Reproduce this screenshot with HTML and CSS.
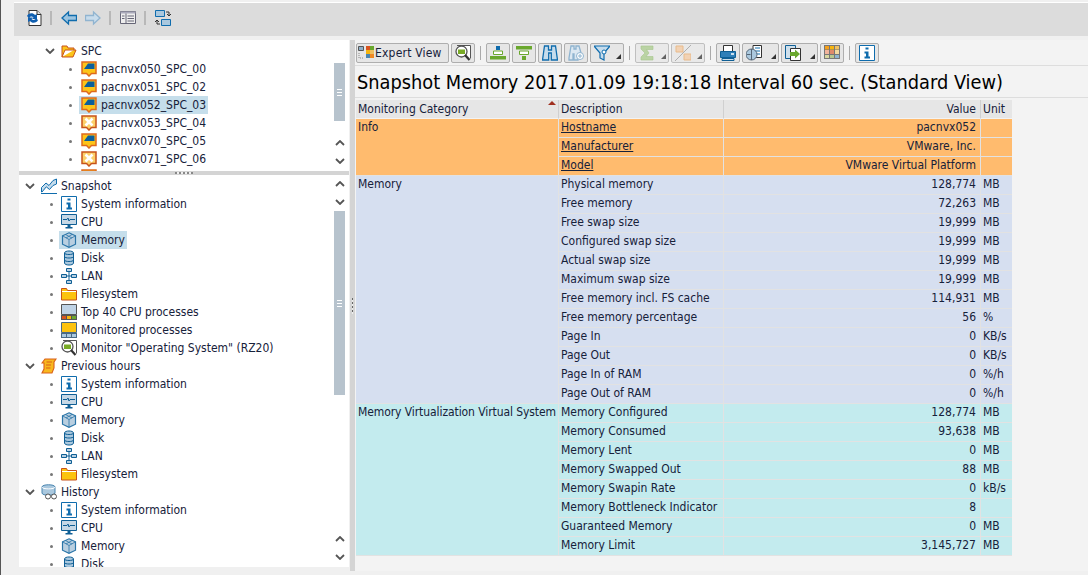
FILE: index.html
```html
<!DOCTYPE html>
<html lang="en">
<head>
<meta charset="utf-8">
<title>Snapshot Memory</title>
<link rel="stylesheet" href="styles.css">
</head>
<body>
<svg class="defs" width="0" height="0" aria-hidden="true">
  <defs>
    <symbol id="i-chev" viewBox="0 0 10 6"><path d="M1 1l4 4 4-4" fill="none" stroke="#555" stroke-width="1.8"/></symbol>
    <symbol id="i-up" viewBox="0 0 10 6"><path d="M1 5l4-4 4 4" fill="none" stroke="#555" stroke-width="1.8"/></symbol>
    <symbol id="i-open" viewBox="0 0 16 16"><path d="M1 14V3h5l1 2h6v2H4l-3 7h11l3-7H13" fill="#fcc419" stroke="#c8531a"/></symbol>
    <symbol id="i-folder" viewBox="0 0 16 16"><path d="M.5 14V2.500h5l1 2h9V14z" fill="#fcc30f" stroke="#c8531a"/><path d="M1 5.500h14" stroke="#fff"/></symbol>
    <symbol id="i-srv" viewBox="0 0 16 16"><path d="M1 1h14v11.500h-4.500L8 15l-2.500-2.500H1z" fill="#fcc419" stroke="#de6a1e" stroke-width="1.500"/><path d="M7 2.500h6.500v5.500H3z" fill="#0a5e9c"/></symbol>
    <symbol id="i-srvx" viewBox="0 0 16 16"><path d="M1 1h14v11.500h-4.500L8 15l-2.500-2.500H1z" fill="#fcd06a" stroke="#c8531a" stroke-width="1.500"/><path d="M4.500 3.500l7 7m0-7l-7 7" stroke="#fff" stroke-width="2.600"/></symbol>
    <symbol id="i-info" viewBox="0 0 16 16"><path d="M.5.500h15v15H.5z" fill="#fff" stroke="#0f6cad"/><path d="M6.500 2.500h3v2h-3zM5.500 6.500h4v5h1.500v2H5.500v-2H7v-3H5.500z" fill="#0f6cad"/></symbol>
    <symbol id="i-cpu" viewBox="0 0 16 16"><path d="M.500.500h15v10H.5z" fill="#c6d8e6" stroke="#0f5f95"/><path d="M2 5.500h4l1-1.500 1 3 1-1.500h5" fill="none" stroke="#0f5f95"/><path d="M6.500 11h3v2h2v1.500h-7V13h2z" fill="#0f5f95"/></symbol>
    <symbol id="i-mem" viewBox="0 0 16 16"><path d="M8 .800l6.500 3v8.400L8 15.300l-6.500-3.100V3.800z" fill="#b9cfe0" stroke="#2a75a8" stroke-width="1.200"/><path d="M1.500 3.800L8 7.500l6.500-3.700M8 7.500v7.800M4.500 2.500L11 6M11 2.500L5 6" fill="none" stroke="#2a75a8" stroke-width=".8"/></symbol>
    <symbol id="i-disk" viewBox="0 0 16 16"><path d="M3.500 3c0-2.700 9-2.700 9 0v10c0 2.700-9 2.700-9 0z" fill="#aac8de" stroke="#0f5f95"/><path d="M3.500 3c0 2 9 2 9 0M3.500 6.500c0 2 9 2 9 0M3.500 10c0 2 9 2 9 0" fill="none" stroke="#0f5f95"/></symbol>
    <symbol id="i-lan" viewBox="0 0 16 16"><path d="M8 3v10M3 8h10" stroke="#0f5f95"/><path d="M5.500.500h5v3h-5zM.500 6.500h5v3h-5zM10.500 6.500h5v3h-5zM5.500 12.500h5v3h-5z" fill="#b8d0e2" stroke="#0f5f95"/></symbol>
    <symbol id="i-top" viewBox="0 0 16 16"><path d="M.500.500h15v10H.5z" fill="#bfd3e6" stroke="#555"/><path d="M0 11h16v5H0z" fill="#555"/><path d="M1 12h4v3H1z" fill="#d9531e"/><path d="M6 12h4v3H6z" fill="#f6b40e"/><path d="M11 12h4v3h-4z" fill="#6aa82e"/></symbol>
    <symbol id="i-mon" viewBox="0 0 16 16"><path d="M.500.500h15v10H.5z" fill="#fcc30f" stroke="#4a6a85"/><path d="M0 11h16v5H0z" fill="#4a6a85"/><path d="M1 12h4v3H1zM6 12h4v3H6zM11 12h4v3h-4z" fill="#aac8de"/></symbol>
    <symbol id="i-rz" viewBox="0 0 16 16"><path d="M2 .500h13.500v13" fill="#fff" stroke="#555"/><circle cx="6.500" cy="6.500" r="5.500" fill="#fff" stroke="#555" stroke-width="1.300"/><path d="M3 4.500h7V9H3z" fill="#79ab26"/><path d="M10 10l4.500 5" stroke="#333" stroke-width="2.200"/></symbol>
    <symbol id="i-chart" viewBox="0 0 16 16"><path d="M.500 14V9.500L5 5l3 2.500 4-5 3.500-1.500v5L12 7.500l-3.500 4-3.200-2.700L1 14z" fill="#c6dcec" stroke="#0f6cad"/><path d="M0 15.500h16" stroke="#0f6cad"/></symbol>
    <symbol id="i-scroll" viewBox="0 0 16 16"><path d="M4 1h11l-2 3v6l-2 5H1l2-4V5H1z" fill="#f8b81f" stroke="#d9601a" stroke-width="1.100"/><path d="M5.500 4h5.500M5 7h5M5 10h4.500" stroke="#d9601a"/></symbol>
    <symbol id="i-hist" viewBox="0 0 16 16"><path d="M1 3c0-3 13-3 13 0v6c0 3-13 3-13 0z" fill="#aac8de" stroke="#4a86b0"/><path d="M1 3c0 2.500 13 2.500 13 0" fill="none" stroke="#fff"/><circle cx="7" cy="12.500" r="2.500" fill="#fff" stroke="#555"/><circle cx="13" cy="12.500" r="2.500" fill="#fff" stroke="#555"/></symbol>
    <symbol id="i-grid" viewBox="0 0 16 16"><path d="M.500 1.500h5v4h-5z" fill="#8fb0c9" stroke="#555"/><path d="M1 8v5h5" fill="none" stroke="#888" stroke-dasharray="1 1"/><path d="M8 1h4v4H8z" fill="#d9531e"/><path d="M8 5h4v4H8z" fill="#f6b40e"/><path d="M8 9h4v4H8z" fill="#4a86b0"/><path d="M12 1h4v4h-4z" fill="#6aa82e"/><path d="M12 5h4v4h-4z" fill="#f0c060"/><path d="M12 9h4v4h-4z" fill="#f08a24"/></symbol>
    <symbol id="i-alignc" viewBox="0 0 16 16"><path d="M6 1h4v4H6z" fill="#0f6cad"/><path d="M3.500 6h9v3.500h-9z" fill="#fff" stroke="#6aa82e"/><path d="M0 11h16v3.500H0z" fill="#6aa82e"/></symbol>
    <symbol id="i-filt" viewBox="0 0 16 16"><path d="M0 1h16v3.500H0z" fill="#6aa82e"/><path d="M3.500 6h9v3.500h-9z" fill="#fff" stroke="#6aa82e"/><path d="M6 11h4v4H6z" fill="#6aa82e"/></symbol>
    <symbol id="i-bin" viewBox="0 0 16 16"><path d="M2.500 1h4v4h3V1h4l2 14H9.300V8H6.700v7H.500z" fill="#c6dcec" stroke="#0f6cad" stroke-width="1.300"/></symbol>
    <symbol id="i-binp" viewBox="0 0 16 16"><path d="M3 1h3v3h2V1h3l2 7-3 2v5H6V9H5v6H1v-2z" fill="#dce8f2" stroke="#8fb4d0" stroke-width="1.300"/><circle cx="12" cy="11" r="3.500" fill="#fff" stroke="#8fb4d0"/><path d="M10 11h4M12 9v4" stroke="#8fb4d0"/></symbol>
    <symbol id="i-fun" viewBox="0 0 16 16"><path d="M0 1h16l-6 7v7l-4-2V8z" fill="#c6dcec" stroke="#0f6cad" stroke-width="1.200"/><circle cx="10" cy="7" r="2" fill="#fff" stroke="#0f6cad"/></symbol>
    <symbol id="i-sum" viewBox="0 0 16 16"><path d="M2 1h12v3.500H7.500L10 8l-3 3.500h7V15H2v-3l4-4-4-4z" fill="#a8c98a" stroke="#8cb56a" stroke-width=".6"/></symbol>
    <symbol id="i-sub" viewBox="0 0 16 16"><path d="M1 1h7v6H1z" fill="#f2c8a0" stroke="#e6a96a"/><path d="M9 9h7v6H9z" fill="#f2c8a0" stroke="#e6a96a"/><path d="M16 0L0 16" stroke="#999"/></symbol>
    <symbol id="i-print" viewBox="0 0 16 16"><path d="M3.500.500h9v6h-9z" fill="#fff" stroke="#333"/><path d="M.500 6.500h15v6H.5z" fill="#2f7fb8" stroke="#0f5f95"/><path d="M2 13.500h12v2H2z" fill="#cfdfea" stroke="#0f5f95"/><path d="M11 9h3" stroke="#fff" stroke-width="1.500"/></symbol>
    <symbol id="i-view" viewBox="0 0 16 16"><path d="M7 .500h8.500v12H7z" fill="#fff" stroke="#333"/><path d="M9 3h5M9 6h5M9 9h5" stroke="#0f6cad"/><circle cx="5.500" cy="9.500" r="5.500" fill="#aac8de" stroke="#567"/><path d="M5.500 4v11M.500 9.500h4" stroke="#567"/></symbol>
    <symbol id="i-exp" viewBox="0 0 16 16"><path d="M.500.500h10v13H.5z" fill="#cfe0ec" stroke="#0f5f95"/><path d="M5.500 3.500h10v12h-10z" fill="#fff" stroke="#333"/><path d="M5 7h5V4.500L15 9l-5 4.500V11H5z" fill="#6aa82e"/></symbol>
    <symbol id="i-cols" viewBox="0 0 16 16"><path d="M0 0h16v14H0z" fill="#777"/><path d="M1 1h4v3.500H1z" fill="#f6a01a"/><path d="M6 1h4v3.500H6z" fill="#f6b40e"/><path d="M11 1h4v3.500h-4z" fill="#f0c060"/><path d="M1 5h4v4H1z" fill="#f2b49c"/><path d="M6 5h4v4H6z" fill="#e08a6a"/><path d="M11 5h4v4h-4z" fill="#f3d9a0"/><path d="M1 10h4v3H1z" fill="#d8d8a0"/><path d="M6 10h4v3H6z" fill="#b8c890"/><path d="M11 10h4v3h-4z" fill="#8fb4d0"/></symbol>
    <symbol id="i-refresh" viewBox="0 0 16 16"><path d="M3 .500h8l4 4v11H3z" fill="#fff" stroke="#333"/><path d="M11 .500v4h4" fill="#ddd" stroke="#333"/><path d="M1 6c1-3 6-4 8-1l2-1v5H6l1.500-1.500C6 6 4 6.500 3 8z" fill="#0f5fb0"/><path d="M12 10c-1 3-6 4-8 1l-2 1V7.500h5L5.500 9c1.500 1.500 3.500 1 4.500-.500z" fill="#0f5fb0"/></symbol>
    <symbol id="i-back" viewBox="0 0 16 16"><path d="M1 8l6.500-6v3.500h8v5h-8V14z" fill="#9cc4e0" stroke="#0f6cad" stroke-width="1.300"/></symbol>
    <symbol id="i-fwd" viewBox="0 0 16 16"><path d="M15 8L8.500 2v3.500h-8v5h8V14z" fill="#c8dcec" stroke="#90b4d0" stroke-width="1.300"/></symbol>
    <symbol id="i-list" viewBox="0 0 16 16"><path d="M.500 1.500h15v12H.5z" fill="#eee" stroke="#667"/><path d="M.500 1.500h15v2H.5z" fill="#aab"/><path d="M6 3.500v10" stroke="#667"/><path d="M7.500 6h6.500M7.500 8.500h6.500M7.500 11h6.500M2 6h2.500M2 8.500h2.500" stroke="#667"/></symbol>
    <symbol id="i-layout" viewBox="0 0 16 16"><path d="M.500.500h9v6h-9z" fill="#aac8de" stroke="#0f6cad"/><path d="M6.500 9.500h9v6h-9z" fill="#aac8de" stroke="#0f6cad"/><path d="M11 2h3v4M14 6l-2-2m2 2l2-2M5 14H2v-4M2 10l-2 2m2-2l2 2" fill="none" stroke="#333"/></symbol>
  </defs>
</svg>
<div class="app">
  <div class="topbar">
    <svg class="ti"><use href="#i-refresh"/></svg><i class="tsep s1"></i>
    <svg class="ti"><use href="#i-back"/></svg>
    <svg class="ti t2"><use href="#i-fwd"/></svg><i class="tsep"></i>
    <svg class="ti"><use href="#i-list"/></svg><i class="tsep"></i>
    <svg class="ti"><use href="#i-layout"/></svg>
  </div>
  <div class="work">
    <div class="left">
      <section class="tree tree-top">
        <div class="tree-body">
          <div class="row l1"><span class="mk"><svg class="chev"><use href="#i-chev"/></svg></span><span class="node"><svg class="ic"><use href="#i-open"/></svg>SPC</span></div>
          <div class="row l2"><span class="mk"><b class="dot"></b></span><span class="node"><svg class="ic"><use href="#i-srv"/></svg>pacnvx050_SPC_00</span></div>
          <div class="row l2"><span class="mk"><b class="dot"></b></span><span class="node"><svg class="ic"><use href="#i-srv"/></svg>pacnvx051_SPC_02</span></div>
          <div class="row l2"><span class="mk"><b class="dot"></b></span><span class="node sel"><svg class="ic"><use href="#i-srv"/></svg>pacnvx052_SPC_03</span></div>
          <div class="row l2"><span class="mk"><b class="dot"></b></span><span class="node"><svg class="ic"><use href="#i-srvx"/></svg>pacnvx053_SPC_04</span></div>
          <div class="row l2"><span class="mk"><b class="dot"></b></span><span class="node"><svg class="ic"><use href="#i-srv"/></svg>pacnvx070_SPC_05</span></div>
          <div class="row l2"><span class="mk"><b class="dot"></b></span><span class="node"><svg class="ic"><use href="#i-srvx"/></svg>pacnvx071_SPC_06</span></div>
          <div class="row l2"><span class="mk"><b class="dot"></b></span><span class="node"><svg class="ic"><use href="#i-srv"/></svg></span></div>
        </div>
        <div class="sb sb-top">
          <div class="sb-track1"></div>
          <div class="thumb"><i class="grip"></i></div>
          <div class="sb-fill"></div>
          <svg class="arr"><use href="#i-up"/></svg>
          <svg class="arr"><use href="#i-chev"/></svg>
        </div>
      </section>
      <div class="hsplit"><i class="hgrip"></i></div>
      <section class="tree tree-low">
        <div class="tree-body">
          <div class="row l0"><span class="mk"><svg class="chev"><use href="#i-chev"/></svg></span><span class="node"><svg class="ic"><use href="#i-chart"/></svg>Snapshot</span></div>
          <div class="row l1"><span class="mk"><b class="dot"></b></span><span class="node"><svg class="ic"><use href="#i-info"/></svg>System information</span></div>
          <div class="row l1"><span class="mk"><b class="dot"></b></span><span class="node"><svg class="ic"><use href="#i-cpu"/></svg>CPU</span></div>
          <div class="row l1"><span class="mk"><b class="dot"></b></span><span class="node sel"><svg class="ic"><use href="#i-mem"/></svg>Memory</span></div>
          <div class="row l1"><span class="mk"><b class="dot"></b></span><span class="node"><svg class="ic"><use href="#i-disk"/></svg>Disk</span></div>
          <div class="row l1"><span class="mk"><b class="dot"></b></span><span class="node"><svg class="ic"><use href="#i-lan"/></svg>LAN</span></div>
          <div class="row l1"><span class="mk"><b class="dot"></b></span><span class="node"><svg class="ic"><use href="#i-folder"/></svg>Filesystem</span></div>
          <div class="row l1"><span class="mk"><b class="dot"></b></span><span class="node"><svg class="ic"><use href="#i-top"/></svg>Top 40 CPU processes</span></div>
          <div class="row l1"><span class="mk"><b class="dot"></b></span><span class="node"><svg class="ic"><use href="#i-mon"/></svg>Monitored processes</span></div>
          <div class="row l1"><span class="mk"><b class="dot"></b></span><span class="node"><svg class="ic"><use href="#i-rz"/></svg>Monitor "Operating System" (RZ20)</span></div>
          <div class="row l0"><span class="mk"><svg class="chev"><use href="#i-chev"/></svg></span><span class="node"><svg class="ic"><use href="#i-scroll"/></svg>Previous hours</span></div>
          <div class="row l1"><span class="mk"><b class="dot"></b></span><span class="node"><svg class="ic"><use href="#i-info"/></svg>System information</span></div>
          <div class="row l1"><span class="mk"><b class="dot"></b></span><span class="node"><svg class="ic"><use href="#i-cpu"/></svg>CPU</span></div>
          <div class="row l1"><span class="mk"><b class="dot"></b></span><span class="node"><svg class="ic"><use href="#i-mem"/></svg>Memory</span></div>
          <div class="row l1"><span class="mk"><b class="dot"></b></span><span class="node"><svg class="ic"><use href="#i-disk"/></svg>Disk</span></div>
          <div class="row l1"><span class="mk"><b class="dot"></b></span><span class="node"><svg class="ic"><use href="#i-lan"/></svg>LAN</span></div>
          <div class="row l1"><span class="mk"><b class="dot"></b></span><span class="node"><svg class="ic"><use href="#i-folder"/></svg>Filesystem</span></div>
          <div class="row l0"><span class="mk"><svg class="chev"><use href="#i-chev"/></svg></span><span class="node"><svg class="ic"><use href="#i-hist"/></svg>History</span></div>
          <div class="row l1"><span class="mk"><b class="dot"></b></span><span class="node"><svg class="ic"><use href="#i-info"/></svg>System information</span></div>
          <div class="row l1"><span class="mk"><b class="dot"></b></span><span class="node"><svg class="ic"><use href="#i-cpu"/></svg>CPU</span></div>
          <div class="row l1"><span class="mk"><b class="dot"></b></span><span class="node"><svg class="ic"><use href="#i-mem"/></svg>Memory</span></div>
          <div class="row l1"><span class="mk"><b class="dot"></b></span><span class="node"><svg class="ic"><use href="#i-disk"/></svg>Disk</span></div>
        </div>
        <div class="sb sb-low">
          <svg class="arr"><use href="#i-up"/></svg>
          <svg class="arr"><use href="#i-chev"/></svg>
          <div class="thumb"><i class="grip"></i></div>
          <div class="sb-fill"></div>
          <svg class="arr"><use href="#i-up"/></svg>
          <svg class="arr"><use href="#i-chev"/></svg>
        </div>
      </section>
    </div>
    <div class="vsplit"><i class="vgrip"></i></div>
    <div class="right">
      <div class="tools">
        <span class="btn expert"><svg class="bi"><use href="#i-grid"/></svg>Expert View</span>
        <span class="btn"><svg class="bi"><use href="#i-rz"/></svg></span>
        <i class="sep"></i>
        <span class="btn"><svg class="bi"><use href="#i-alignc"/></svg></span>
        <span class="btn"><svg class="bi"><use href="#i-filt"/></svg></span>
        <span class="btn"><svg class="bi"><use href="#i-bin"/></svg></span>
        <span class="btn"><svg class="bi"><use href="#i-binp"/></svg></span>
        <span class="btn drop"><svg class="bi"><use href="#i-fun"/></svg><i class="tri"></i></span>
        <i class="sep"></i>
        <span class="btn drop off"><svg class="bi"><use href="#i-sum"/></svg><i class="tri"></i></span>
        <span class="btn drop off"><svg class="bi"><use href="#i-sub"/></svg><i class="tri"></i></span>
        <i class="sep"></i>
        <span class="btn"><svg class="bi"><use href="#i-print"/></svg></span>
        <span class="btn drop wide"><svg class="bi"><use href="#i-view"/></svg><i class="tri"></i></span>
        <span class="btn drop wide"><svg class="bi"><use href="#i-exp"/></svg><i class="tri"></i></span>
        <span class="btn"><svg class="bi"><use href="#i-cols"/></svg></span>
        <i class="sep"></i>
        <span class="btn"><svg class="bi"><use href="#i-info"/></svg></span>
      </div>
      <h1 class="title">Snapshot Memory 2017.01.09 19:18:18 Interval 60 sec. (Standard View)</h1>
      <table class="grid">
        <colgroup><col class="c1"><col class="c2"><col class="c3"><col class="c4"></colgroup>
        <thead>
          <tr><th class="sorted">Monitoring Category<i class="sort"></i></th><th>Description</th><th class="num">Value</th><th>Unit</th></tr>
        </thead>
        <tbody class="info">
          <tr><td rowspan="3">Info</td><td><u>Hostname</u></td><td class="num">pacnvx052</td><td></td></tr>
          <tr><td><u>Manufacturer</u></td><td class="num">VMware, Inc.</td><td></td></tr>
          <tr><td><u>Model</u></td><td class="num">VMware Virtual Platform</td><td></td></tr>
        </tbody>
        <tbody class="mem">
          <tr><td rowspan="12">Memory</td><td>Physical memory</td><td class="num">128,774</td><td>MB</td></tr>
          <tr><td>Free memory</td><td class="num">72,263</td><td>MB</td></tr>
          <tr><td>Free swap size</td><td class="num">19,999</td><td>MB</td></tr>
          <tr><td>Configured swap size</td><td class="num">19,999</td><td>MB</td></tr>
          <tr><td>Actual swap size</td><td class="num">19,999</td><td>MB</td></tr>
          <tr><td>Maximum swap size</td><td class="num">19,999</td><td>MB</td></tr>
          <tr><td>Free memory incl. FS cache</td><td class="num">114,931</td><td>MB</td></tr>
          <tr><td>Free memory percentage</td><td class="num">56</td><td>%</td></tr>
          <tr><td>Page In</td><td class="num">0</td><td>KB/s</td></tr>
          <tr><td>Page Out</td><td class="num">0</td><td>KB/s</td></tr>
          <tr><td>Page In of RAM</td><td class="num">0</td><td>%/h</td></tr>
          <tr><td>Page Out of RAM</td><td class="num">0</td><td>%/h</td></tr>
        </tbody>
        <tbody class="virt">
          <tr><td rowspan="8" class="tight">Memory Virtualization Virtual System</td><td>Memory Configured</td><td class="num">128,774</td><td>MB</td></tr>
          <tr><td>Memory Consumed</td><td class="num">93,638</td><td>MB</td></tr>
          <tr><td>Memory Lent</td><td class="num">0</td><td>MB</td></tr>
          <tr><td>Memory Swapped Out</td><td class="num">88</td><td>MB</td></tr>
          <tr><td>Memory Swapin Rate</td><td class="num">0</td><td>kB/s</td></tr>
          <tr><td>Memory Bottleneck Indicator</td><td class="num">8</td><td></td></tr>
          <tr><td>Guaranteed Memory</td><td class="num">0</td><td>MB</td></tr>
          <tr><td>Memory Limit</td><td class="num">3,145,727</td><td>MB</td></tr>
        </tbody>
      </table>
    </div>
  </div>
  <div class="footer"></div>
</div>
</body>
</html>
```
FILE: styles.css
```css
* { box-sizing: border-box; }
html, body { margin: 0; height: 100%; }
body {
  width: 1088px; height: 575px; overflow: hidden;
  background: #f0f0f0; color: #16213a;
  font-family: "DejaVu Sans", sans-serif; font-size: 12px; font-stretch: condensed;
}
.defs { display: block; height: 0; }
svg { display: block; flex: none; }
.app { display: flex; flex-direction: column; height: 575px; border-left: 1px solid #555; padding-top: 2px; }
.topbar {
  margin-left: 13px; height: 34px; flex: none;
  border-top: 1px solid #fff; background: #dcdcdc;
  display: flex; align-items: center; padding: 0 0 3px 12px;
}
.ti { width: 16px; height: 16px; }
.t2 { margin-left: 8px; }
.tsep { width: 2px; height: 14px; background: #b8b8b8; margin: 0 9px 0 8px; }
.work { display: flex; height: 531px; flex: none; margin-top: 4px; padding-left: 18px; }
.left { width: 330px; flex: none; display: flex; flex-direction: column; }
.tree { display: flex; background: #fff; overflow: hidden; }
.tree-top { height: 131px; flex: none; }
.tree-low { height: 392px; flex: none; }
.tree-body { width: 313px; flex: none; overflow: hidden; padding: 2px 0 0; }
.row { height: 18px; display: flex; align-items: center; white-space: nowrap; }
.l0 { padding-left: 5px; }
.l1 { padding-left: 25px; }
.l2 { padding-left: 45px; }
.mk { width: 15px; flex: none; display: flex; }
.chev { width: 10px; height: 6px; margin-left: 1px; }
.dot { width: 3px; height: 3px; background: #777; border-radius: 50%; margin-left: 5px; }
.l1 .dot { margin-left: 6px; }
.node { display: flex; align-items: center; gap: 4px; height: 18px; padding: 0 2px; }
.ic { width: 16px; height: 16px; }
.sel { background: #c5deeb; }
.sb { width: 15px; flex: none; display: flex; flex-direction: column; align-items: center; padding: 0 0 1px; background: #fff; }
.sb-track1 { height: 23px; flex: none; }
.thumb { width: 11px; background: #b7c3cd; display: flex; align-items: center; justify-content: center; flex: none; }
.sb-top .thumb { height: 58px; }
.sb-low .thumb { height: 184px; }
.sb-fill { flex: 1; }
.grip { width: 5px; height: 7px; border-top: 1px solid #fff; border-bottom: 1px solid #fff; background: linear-gradient(#fff, #fff) center / 5px 1px no-repeat; }
.arr { width: 10px; height: 6px; margin: 6px 0; }
.hsplit { height: 4px; flex: none; background: #d4d4d4; display: flex; justify-content: center; }
.hgrip { width: 18px; height: 2px; margin-top: 1px; background: repeating-linear-gradient(90deg, #888 0 2px, #eee 2px 4px); }
.vsplit { width: 5px; margin-left: 1px; flex: none; background: #d4d4d4; display: flex; align-items: center; }
.vgrip { width: 1px; height: 16px; margin-left: 2px; background: repeating-linear-gradient(#666 0 2px, #eee 2px 4px); }
.right { flex: 1; min-width: 0; background: #f3f3f3; }
.tools { height: 26px; border-bottom: 1px solid #ddd; display: flex; align-items: center; padding: 1px 0 0 1px; }
.btn {
  height: 20px; width: 24px; margin-right: 2px; flex: none;
  border: 1px solid #aeaeae; border-radius: 2px; background: #e6e6e6;
  display: flex; align-items: center; justify-content: flex-start; padding-left: 3px;
  color: #16213a; font-size: 12px; position: relative;
}
.bi { width: 16px; height: 16px; }
.expert { width: 93px; gap: 1px; padding-left: 1px; letter-spacing: .2px; }
.drop { width: 34px; }
.wide { width: 37px; }
.off { opacity: .75; }
.tri { position: absolute; right: 2px; bottom: 3px; width: 0; height: 0; border-left: 5px solid transparent; border-bottom: 5px solid #333; }
.sep { width: 1px; height: 14px; background: #aaa; margin: 0 5px 0 3px; flex: none; }
.title {
  margin: 0; height: 32px; border-bottom: 1px solid #ddd; padding-left: 2px;
  font-weight: 400; font-size: 19.8px; line-height: 34px; color: #000; white-space: nowrap;
}
.grid { border-collapse: separate; border-spacing: 0; table-layout: fixed; width: 656px; margin: 2px 0 0 1px; }
.c1 { width: 203px; } .c2 { width: 165px; } .c3 { width: 257px; } .c4 { width: 31px; }
.grid th, .grid td {
  height: 19px; padding: 0 2px; font-weight: 400; text-align: left; vertical-align: top;
  white-space: nowrap; overflow: hidden; line-height: 16px;
  border-right: 1px solid #e2e2e2; border-bottom: 1px solid #e2e2e2;
}
.grid th { background: #e6e6e6; border-right-color: #d0d0d0; border-bottom-color: #f3f3f3; padding-top: 1px; line-height: 17px; }
.grid th:last-child, .grid td:last-child { border-right: 0; padding-right: 0; }
.grid .num { text-align: right; padding-right: 4px; }
.grid .tight { letter-spacing: -.08px; }
.sorted { position: relative; }
.sort { position: absolute; right: 2px; top: 1px; width: 0; height: 0; border-left: 4px solid transparent; border-right: 4px solid transparent; border-bottom: 4px solid #a03020; }
.info td { background: #ffbb6e; }
.mem td { background: #d6dff0; }
.virt td { background: #c3ebee; }
.footer { margin: 4px 0 0 13px; height: 3px; background: #d4d4d4; }
```
